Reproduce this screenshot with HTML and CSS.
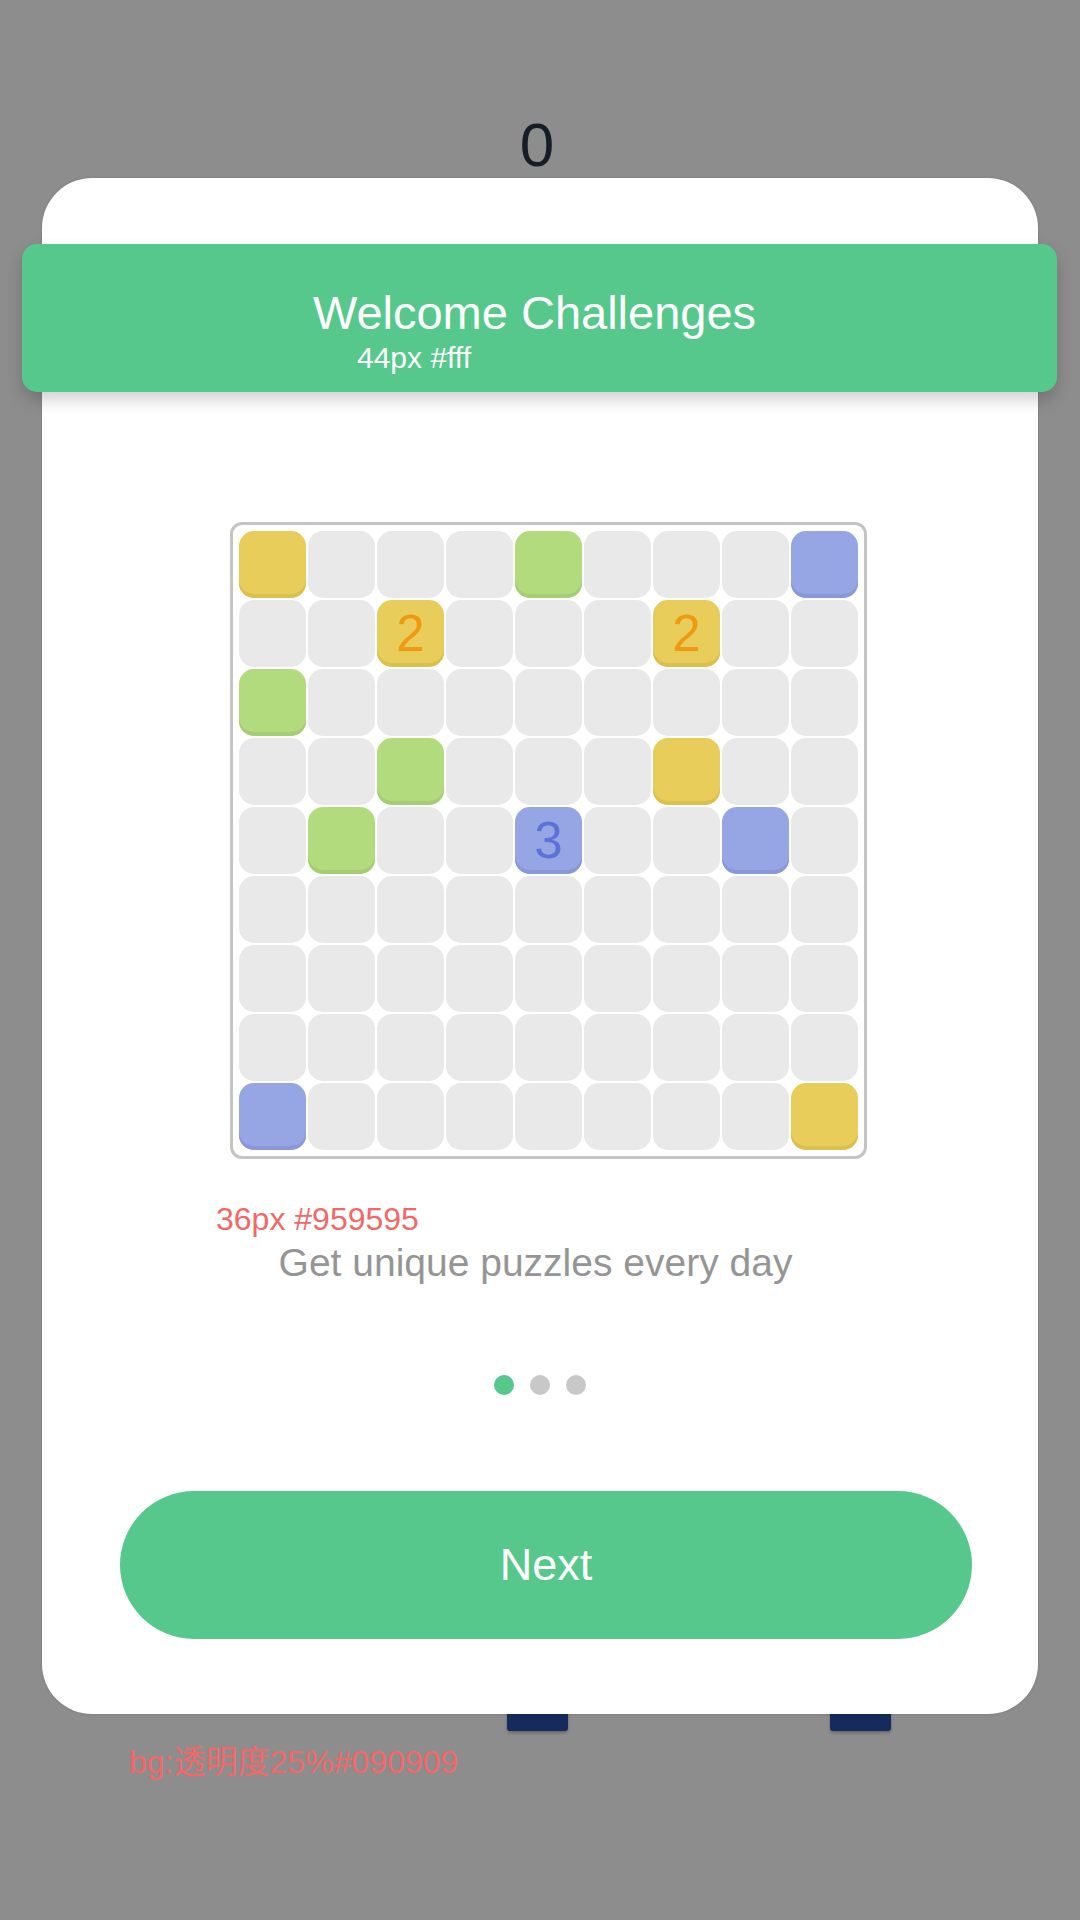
FILE: index.html
```html
<!DOCTYPE html>
<html lang="en">
<head>
<meta charset="utf-8">
<title>Welcome Challenges</title>
<link rel="stylesheet" href="styles.css">
</head>
<body>
<div class="page">
  <div class="score">0</div>
  <div class="bg-blocks">
    <div class="bg-block"></div>
    <div class="bg-block"></div>
  </div>
</div>

<div class="overlay">
  <div class="card">
    <div class="header">
      <div class="title">Welcome Challenges</div>
      <div class="note note-white">44px #fff</div>
    </div>

    <div class="board">
      <div class="cell y"></div><div class="cell"></div><div class="cell"></div><div class="cell"></div><div class="cell g"></div><div class="cell"></div><div class="cell"></div><div class="cell"></div><div class="cell b"></div>
      <div class="cell"></div><div class="cell"></div><div class="cell y">2</div><div class="cell"></div><div class="cell"></div><div class="cell"></div><div class="cell y">2</div><div class="cell"></div><div class="cell"></div>
      <div class="cell g"></div><div class="cell"></div><div class="cell"></div><div class="cell"></div><div class="cell"></div><div class="cell"></div><div class="cell"></div><div class="cell"></div><div class="cell"></div>
      <div class="cell"></div><div class="cell"></div><div class="cell g"></div><div class="cell"></div><div class="cell"></div><div class="cell"></div><div class="cell y"></div><div class="cell"></div><div class="cell"></div>
      <div class="cell"></div><div class="cell g"></div><div class="cell"></div><div class="cell"></div><div class="cell b">3</div><div class="cell"></div><div class="cell"></div><div class="cell b"></div><div class="cell"></div>
      <div class="cell"></div><div class="cell"></div><div class="cell"></div><div class="cell"></div><div class="cell"></div><div class="cell"></div><div class="cell"></div><div class="cell"></div><div class="cell"></div>
      <div class="cell"></div><div class="cell"></div><div class="cell"></div><div class="cell"></div><div class="cell"></div><div class="cell"></div><div class="cell"></div><div class="cell"></div><div class="cell"></div>
      <div class="cell"></div><div class="cell"></div><div class="cell"></div><div class="cell"></div><div class="cell"></div><div class="cell"></div><div class="cell"></div><div class="cell"></div><div class="cell"></div>
      <div class="cell b"></div><div class="cell"></div><div class="cell"></div><div class="cell"></div><div class="cell"></div><div class="cell"></div><div class="cell"></div><div class="cell"></div><div class="cell y"></div>
    </div>

    <div class="note note-red note-desc">36px #959595</div>
    <div class="desc">Get unique puzzles every day</div>

    <div class="dots">
      <span class="dot active"></span>
      <span class="dot"></span>
      <span class="dot"></span>
    </div>

    <div class="next-btn">Next</div>
  </div>
  <div class="note note-red note-bg">bg:透明度25%#090909</div>
</div>
</body>
</html>
```

FILE: styles.css
```css
html, body {
  margin: 0;
  padding: 0;
}

body {
  width: 1080px;
  height: 1920px;
  background: #8d8d8d;
  font-family: "Liberation Sans", "Noto Sans CJK SC", Arial, sans-serif;
  position: relative;
  overflow: hidden;
}

.page {
  display: flex;
  flex-direction: column;
  padding-top: 114px;
}

.score {
  font-size: 62px;
  line-height: 62px;
  height: 62px;
  color: #161d27;
  text-align: center;
  padding-right: 6px;
}

.bg-blocks {
  display: flex;
  gap: 262px;
  margin-top: 1504px;
  padding-left: 507px;
}

.bg-block {
  width: 61px;
  height: 51px;
  background: #142b5b;
  border-radius: 3px;
  box-shadow: 0 2px 3px rgba(0, 0, 0, 0.25);
}

.overlay {
  position: absolute;
  inset: 0;
  display: flex;
  flex-direction: column;
  align-items: flex-start;
  padding-top: 178px;
  padding-left: 42px;
  box-sizing: border-box;
}

.card {
  width: 996px;
  background: #ffffff;
  border-radius: 50px;
  display: flex;
  flex-direction: column;
  align-items: flex-start;
  padding-bottom: 75px;
  box-shadow: 0 0 3px rgba(0, 0, 0, 0.15);
}

.header {
  box-sizing: border-box;
  width: 1035px;
  height: 148px;
  margin: 66px 0 0 -20px;
  background: #56c88b;
  border-radius: 15px;
  box-shadow: 0 8px 16px rgba(0, 0, 0, 0.18);
  display: flex;
  flex-direction: column;
  align-items: center;
  padding-top: 49px;
}

.title {
  font-size: 47px;
  line-height: 40px;
  color: #ffffff;
  margin-left: -10px;
}

.note {
  font-size: 32px;
  line-height: 32px;
  white-space: nowrap;
}

.note-white {
  color: #ffffff;
  align-self: flex-start;
  margin-top: 13px;
  margin-left: 335px;
  font-size: 30px;
  line-height: 24px;
}

.note-red {
  color: #f26868;
}

.board {
  box-sizing: border-box;
  margin-top: 130px;
  margin-left: 188px;
  border: 3px solid #c4c4c4;
  border-radius: 12px;
  padding: 6px;
  display: grid;
  grid-template-columns: repeat(9, 67px);
  grid-auto-rows: 67px;
  gap: 2px;
}

.cell {
  background: #e9e9e9;
  border-radius: 15px;
  display: flex;
  align-items: center;
  justify-content: center;
  font-size: 51px;
  line-height: 1;
}

.cell.y {
  background: #e8cd5a;
  box-shadow: inset 0 -4px 0 #dcc04f;
  color: #ef9a12;
}

.cell.g {
  background: #b2db7e;
  box-shadow: inset 0 -4px 0 #a6cd74;
}

.cell.b {
  background: #96a5e3;
  box-shadow: inset 0 -4px 0 #8a98d9;
  color: #5d72d9;
}

.note-desc {
  margin-top: 44px;
  margin-left: 174px;
}

.desc {
  align-self: stretch;
  text-align: center;
  font-size: 39px;
  line-height: 39px;
  color: #959595;
  margin-top: 8px;
  padding-right: 9px;
}

.dots {
  align-self: stretch;
  display: flex;
  justify-content: center;
  gap: 16px;
  margin-top: 93px;
}

.dot {
  width: 20px;
  height: 20px;
  border-radius: 50%;
  background: #c8c8c8;
}

.dot.active {
  background: #56c88b;
}

.next-btn {
  box-sizing: border-box;
  width: 852px;
  height: 148px;
  margin-top: 96px;
  margin-left: 78px;
  border-radius: 74px;
  background: #56c88b;
  color: #ffffff;
  font-size: 45px;
  display: flex;
  align-items: center;
  justify-content: center;
}

.note-bg {
  margin-top: 32px;
  margin-left: 87px;
}
```
